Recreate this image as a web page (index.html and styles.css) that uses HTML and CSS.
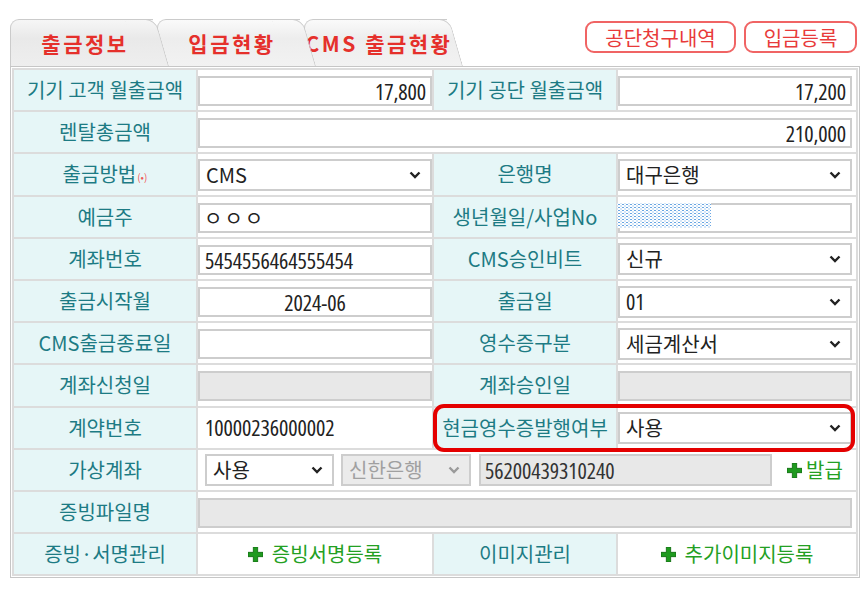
FILE: index.html
```html
<!DOCTYPE html>
<html>
<head>
    <meta charset="utf-8">
    <title>출금정보</title>
    <link rel="stylesheet" href="styles.css">
</head>
<body>
    <div class="head">
        <div class="tabs">
            <div class="tab t1">출금정보</div>
            <div class="tab t2">입금현황</div>
            <div class="tab t3">CMS 출금현황</div>
        </div>
        <div class="btns">
            <a class="btn wide">공단청구내역</a>
            <a class="btn">입금등록</a>
        </div>
    </div>

    <div class="frame">
        <table class="form">
            <colgroup>
                <col class="c1"><col class="c2"><col class="c3"><col class="c4">
            </colgroup>
            <tr>
                <td class="lb">기기 고객 월출금액</td>
                <td><input class="inp r num" value="17,800"></td>
                <td class="lb">기기 공단 월출금액</td>
                <td><input class="inp r num" value="17,200"></td>
            </tr>
            <tr>
                <td class="lb">렌탈총금액</td>
                <td colspan="3"><input class="inp r num" value="210,000"></td>
            </tr>
            <tr>
                <td class="lb">출금방법<span class="req">(•)</span></td>
                <td><div class="sel"><span>CMS</span><svg class="chev" viewBox="0 0 12 8"><path d="M1.5 1.5L6 6l4.5-4.5"/></svg></div></td>
                <td class="lb">은행명</td>
                <td><div class="sel"><span>대구은행</span><svg class="chev" viewBox="0 0 12 8"><path d="M1.5 1.5L6 6l4.5-4.5"/></svg></div></td>
            </tr>
            <tr>
                <td class="lb">예금주</td>
                <td><input class="inp owner" value="ㅇㅇㅇ"></td>
                <td class="lb">생년월일/사업No</td>
                <td class="rel"><input class="inp" value=""><div class="mask"></div></td>
            </tr>
            <tr>
                <td class="lb">계좌번호</td>
                <td><input class="inp num" value="5454556464555454"></td>
                <td class="lb">CMS승인비트</td>
                <td><div class="sel"><span>신규</span><svg class="chev" viewBox="0 0 12 8"><path d="M1.5 1.5L6 6l4.5-4.5"/></svg></div></td>
            </tr>
            <tr>
                <td class="lb">출금시작월</td>
                <td><input class="inp c num" value="2024-06"></td>
                <td class="lb">출금일</td>
                <td><div class="sel"><span class="num">01</span><svg class="chev" viewBox="0 0 12 8"><path d="M1.5 1.5L6 6l4.5-4.5"/></svg></div></td>
            </tr>
            <tr>
                <td class="lb">CMS출금종료일</td>
                <td><input class="inp" value=""></td>
                <td class="lb">영수증구분</td>
                <td><div class="sel"><span>세금계산서</span><svg class="chev" viewBox="0 0 12 8"><path d="M1.5 1.5L6 6l4.5-4.5"/></svg></div></td>
            </tr>
            <tr>
                <td class="lb">계좌신청일</td>
                <td><input class="inp" value="" disabled></td>
                <td class="lb">계좌승인일</td>
                <td><input class="inp" value="" disabled></td>
            </tr>
            <tr>
                <td class="lb">계약번호</td>
                <td class="txt"><span class="num">10000236000002</span></td>
                <td class="lb mark">현금영수증발행여부</td>
                <td><div class="sel"><span>사용</span><svg class="chev" viewBox="0 0 12 8"><path d="M1.5 1.5L6 6l4.5-4.5"/></svg></div></td>
            </tr>
            <tr>
                <td class="lb">가상계좌</td>
                <td colspan="3">
                    <div class="vacct">
                        <div class="sel s-use"><span>사용</span><svg class="chev" viewBox="0 0 12 8"><path d="M1.5 1.5L6 6l4.5-4.5"/></svg></div>
                        <div class="sel s-bank off"><span>신한은행</span><svg class="chev" viewBox="0 0 12 8"><path d="M1.5 1.5L6 6l4.5-4.5"/></svg></div>
                        <input class="inp acct num" value="56200439310240" disabled>
                        <a class="add"><svg class="plus" viewBox="0 0 14 14"><path d="M5 0h4v5h5v4H9v5H5V9H0V5h5z"/></svg>발급</a>
                    </div>
                </td>
            </tr>
            <tr>
                <td class="lb">증빙파일명</td>
                <td colspan="3"><input class="inp" value="" disabled></td>
            </tr>
            <tr>
                <td class="lb">증빙·서명관리</td>
                <td class="ctr"><a class="add"><svg class="plus" viewBox="0 0 14 14"><path d="M5 0h4v5h5v4H9v5H5V9H0V5h5z"/></svg>증빙서명등록</a></td>
                <td class="lb">이미지관리</td>
                <td class="ctr"><a class="add"><svg class="plus" viewBox="0 0 14 14"><path d="M5 0h4v5h5v4H9v5H5V9H0V5h5z"/></svg>추가이미지등록</a></td>
            </tr>
        </table>
    </div>
</body>
</html>
```

FILE: styles.css
```css
body {
    margin: 0;
    font-family: "Noto Sans CJK KR", "Noto Sans", sans-serif;
    color: #222;
    background: #fff;
}

/* top bar: tabs on the left, red buttons on the right */
.head {
    display: flex;
    justify-content: space-between;
    padding: 19px 11px 0 10px;
}
.tabs {
    display: flex;
    height: 47px;
}
.tab {
    position: relative;
    box-sizing: border-box;
    width: 143px;
    margin-right: 4px;
    padding-left: 6px;
    border: 1px solid #cbcbcb;
    border-width: 1px 0 0 1px;
    border-radius: 9px 0 0 0;
    background: linear-gradient(#fafafa, #ededed 40%, #f2f2f2);
    display: flex;
    align-items: center;
    justify-content: center;
    font-size: 21px;
    font-weight: 700;
    letter-spacing: 2.5px;
    color: #e5302b;
    white-space: nowrap;
}
/* slanted right edge of each tab */
.tab::after {
    content: "";
    position: absolute;
    z-index: -1;
    top: -1px;
    bottom: 0;
    right: -16px;
    width: 30px;
    border: 1px solid #cbcbcb;
    border-width: 1px 1px 0 0;
    border-radius: 0 10px 0 0;
    background: inherit;
    transform: skewX(16deg);
    transform-origin: 0 100%;
}
.t1 { z-index: 3; background: linear-gradient(#f6f6f6, #e9e9e9 40%, #eeeeee); }
.t2 { z-index: 2; }
.t3 { z-index: 1; }

.btns {
    display: flex;
    gap: 8px;
    margin-top: 2px;
}
.btn {
    box-sizing: border-box;
    width: 113px;
    height: 32px;
    display: flex;
    align-items: center;
    justify-content: center;
    border: 2px solid #f06464;
    border-radius: 9px;
    color: #e83a3a;
    font-size: 20px;
    cursor: pointer;
}
.btn.wide { width: 151px; }

/* form table */
.frame {
    margin-left: 10px;
    width: 850px;
    box-sizing: border-box;
    border: 1px solid #c6c6c6;
    padding: 1px;
    background: #fff;
}
.form {
    width: 100%;
    table-layout: fixed;
    border-collapse: separate;
    border-spacing: 2px;
    background: #dcdcdc;
}
.c1 { width: 182px; }
.c2 { width: 234px; }
.c3 { width: 182px; }
.c4 { width: 238px; }
.form td {
    height: 40.2px;
    padding: 0;
    background: #fff;
    font-size: 20px;
    line-height: 1.2;
    vertical-align: middle;
}
.form td.lb {
    background: #e6f6f7;
    color: #1d7b84;
    text-align: center;
    white-space: nowrap;
}
.req {
    font-size: 10px;
    color: #f05a5a;
    margin-left: 1px;
    vertical-align: middle;
}

/* narrow, tall digits for amounts and numbers */
.num {
    font-family: "Open Sans", "Noto Sans CJK KR", sans-serif;
    font-stretch: 75%;
    font-size: 22px;
    letter-spacing: -0.1px;
}

.inp {
    display: block;
    box-sizing: border-box;
    width: 100%;
    height: 30px;
    margin: 2px 0 0;
    padding: 0 5px;
    border: 2px solid #cdcdcd;
    background: #fff;
    font-family: inherit;
    font-size: 20px;
    color: #222;
    outline: none;
}
.inp.num {
    font-family: "Open Sans", "Noto Sans CJK KR", sans-serif;
    font-size: 22px;
}
.inp.r { text-align: right; padding-right: 4px; }
.inp.c { text-align: center; }
.inp.owner { letter-spacing: 2px; padding-left: 4px; }
.inp:disabled {
    background: #e8e8e8;
    color: #333;
}
.form td:last-child > .inp,
.form td:last-child > .sel { width: calc(100% - 4px); }

.sel {
    box-sizing: border-box;
    width: 100%;
    height: 32px;
    margin-top: 1px;
    padding: 0 9px 0 6px;
    border: 2px solid #cdcdcd;
    background: #fff;
    display: flex;
    align-items: center;
    justify-content: space-between;
    white-space: nowrap;
}
.chev {
    flex: none;
    width: 12px;
    height: 8px;
    fill: none;
    stroke: #222;
    stroke-width: 2.4;
}
.sel.off {
    background: #ebebeb;
    color: #a0a0a0;
}
.sel.off .chev { stroke: #9a9a9a; }

.form td.txt { padding-left: 7px; }

/* 생년월일 masked value */
.rel { position: relative; }
.mask {
    position: absolute;
    left: -1px;
    top: 6px;
    width: 94px;
    height: 25px;
    background-color: #fff;
    background-image:
        radial-gradient(circle, #6aa6e2 30%, transparent 42%),
        radial-gradient(circle, #a9cdf0 30%, transparent 42%);
    background-size: 4px 3px, 4px 3px;
    background-position: 0 0, 2px 1.5px;
}

/* highlighted 현금영수증 row */
.mark { position: relative; }
.mark::after {
    content: "";
    position: absolute;
    top: -4px;
    bottom: -4px;
    left: -1px;
    width: 422px;
    box-sizing: border-box;
    border: 4px solid #e40000;
    border-radius: 11px;
    pointer-events: none;
}

.vacct {
    display: flex;
    align-items: center;
    margin-top: 1px;
    padding-left: 7px;
}
.vacct > * { flex: none; }
.vacct .sel { margin: 0; }
.vacct .s-use { width: 129px; }
.vacct .s-bank { width: 130px; margin-left: 7px; }
.vacct .inp.acct {
    width: 293px;
    height: 32px;
    margin: 0 0 0 8px;
    padding-left: 4px;
}
.vacct .add { margin-left: 15px; gap: 4px; }

.ctr { text-align: center; }
.add {
    display: inline-flex;
    align-items: center;
    gap: 9px;
    color: #23a023;
    font-size: 20px;
    cursor: pointer;
}
.plus {
    width: 15px;
    height: 15px;
    fill: #1f9a1f;
    stroke: #0e6a0e;
    stroke-width: 0.8;
}
```
